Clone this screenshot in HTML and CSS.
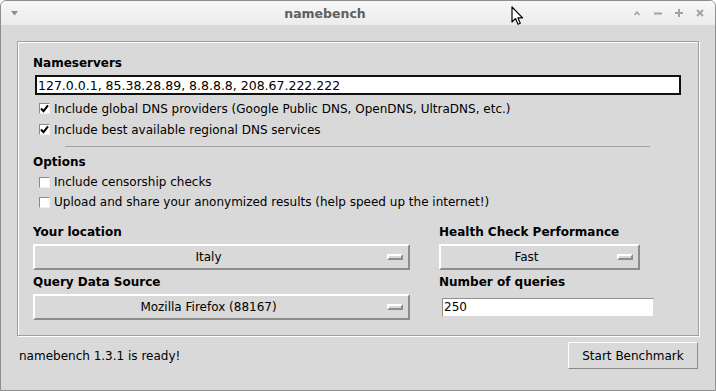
FILE: index.html
```html
<!DOCTYPE html>
<html lang="en">
<head>
    <meta charset="UTF-8">
    <title>namebench</title>
    <link rel="stylesheet" href="styles.css">
</head>
<body>
    <div class="window">
        <div class="titlebar">
            <svg class="menu-arrow" width="7" height="5" viewBox="0 0 7 5"><path d="M0 0 H7 L3.5 4.5 Z" fill="#8c8c8c"/></svg>
            <div class="title">namebench</div>
            <div class="wm-buttons">
                <svg width="10" height="10" viewBox="0 0 10 10"><polyline points="2.5,7 5,4.3 7.5,7" fill="none" stroke="#a2a2a2" stroke-width="1.6"/></svg>
                <svg width="10" height="10" viewBox="0 0 10 10"><line x1="1" y1="5.5" x2="9" y2="5.5" stroke="#a2a2a2" stroke-width="2"/></svg>
                <svg width="10" height="10" viewBox="0 0 10 10"><line x1="1" y1="5" x2="9" y2="5" stroke="#a2a2a2" stroke-width="2"/><line x1="5" y1="1" x2="5" y2="9" stroke="#a2a2a2" stroke-width="2"/></svg>
                <svg width="10" height="10" viewBox="0 0 10 10"><line x1="2" y1="2" x2="8" y2="8" stroke="#a2a2a2" stroke-width="2"/><line x1="8" y1="2" x2="2" y2="8" stroke="#a2a2a2" stroke-width="2"/></svg>
            </div>
        </div>

        <div class="client">
            <div class="frame">
                <div class="heading">Nameservers</div>
                <input class="entry nameservers" type="text" value="127.0.0.1, 85.38.28.89, 8.8.8.8, 208.67.222.222">
                <div class="check wide-row">
                    <span class="box"><svg width="9" height="9" viewBox="0 0 9 9"><polyline points="1,4.5 3.5,7.2 8,1.3" fill="none" stroke="#000" stroke-width="2"/></svg></span>
                    Include global DNS providers (Google Public DNS, OpenDNS, UltraDNS, etc.)
                </div>
                <div class="check wide-row">
                    <span class="box"><svg width="9" height="9" viewBox="0 0 9 9"><polyline points="1,4.5 3.5,7.2 8,1.3" fill="none" stroke="#000" stroke-width="2"/></svg></span>
                    Include best available regional DNS services
                </div>
                <div class="separator"></div>

                <div class="heading options">Options</div>
                <div class="check">
                    <span class="box"></span>
                    Include censorship checks
                </div>
                <div class="check">
                    <span class="box"></span>
                    Upload and share your anonymized results (help speed up the internet!)
                </div>

                <div class="choices">
                    <div class="heading">Your location</div>
                    <div class="heading">Health Check Performance</div>
                    <div class="menubutton">
                        <span class="value">Italy</span>
                        <span class="indicator"></span>
                    </div>
                    <div class="menubutton short">
                        <span class="value">Fast</span>
                        <span class="indicator"></span>
                    </div>
                    <div class="heading">Query Data Source</div>
                    <div class="heading">Number of queries</div>
                    <div class="menubutton">
                        <span class="value">Mozilla Firefox (88167)</span>
                        <span class="indicator"></span>
                    </div>
                    <div class="cell">
                        <input class="entry queries" type="text" value="250">
                    </div>
                </div>
            </div>

            <div class="footer">
                <span class="status">namebench 1.3.1 is ready!</span>
                <button class="start">Start Benchmark</button>
            </div>
        </div>

        <svg class="cursor" width="13" height="20" viewBox="0 0 13 20"><path d="M1 1 L1 16 L4.5 12.6 L7 18.3 L9.3 17.3 L6.9 11.8 L11.6 11.8 Z" fill="#fff" stroke="#000" stroke-width="1.2" stroke-linejoin="round"/></svg>
    </div>
</body>
</html>
```

FILE: styles.css
```css
body {
    margin: 0;
    background: #ffffff;
    font-family: "DejaVu Sans", Verdana, sans-serif;
    font-size: 12px;
    color: #000;
}
.window {
    position: relative;
    width: 716px;
    height: 391px;
    box-sizing: border-box;
    border: 1px solid #8e8e8e;
    border-radius: 6px 6px 0 0;
    overflow: hidden;
    background: #d9d9d9;
}
.titlebar {
    height: 24px;
    display: flex;
    align-items: center;
    padding: 0 10px 0 10px;
    background: linear-gradient(#f7f7f7, #ececec);
}
.menu-arrow {
    margin-top: 1px;
}
.title {
    flex: 1;
    text-align: center;
    font-size: 12.5px;
    font-weight: bold;
    color: #5f5f5f;
}
.wm-buttons {
    display: flex;
    gap: 11px;
}
.client {
    height: 365px;
}
.frame {
    margin: 16px 16px 0 16px;
    padding: 11px 0 15px 15px;
    border: 1px solid #9f9f9f;
    box-shadow: inset 1px 1px 0 #fff, 1px 1px 0 #fff;
}
.heading {
    height: 20px;
    line-height: 21px;
    font-weight: bold;
}
.entry {
    display: block;
    box-sizing: border-box;
    margin: 0;
    font-family: "DejaVu Sans", Verdana, sans-serif;
    font-size: 12px;
    color: #000;
    background: #fff;
    outline: none;
}
.nameservers {
    margin: 2px 0 0 2px;
    width: 646px;
    height: 20px;
    padding: 0 0 0 1px;
    font-size: 12.5px;
    border: 2px solid #111;
}
.check {
    display: flex;
    align-items: center;
    height: 20px;
    padding-left: 6px;
}
.wide-row {
    height: 21px;
}
.nameservers + .check {
    margin-top: 3px;
}
.box {
    width: 11px;
    height: 11px;
    box-sizing: border-box;
    margin-right: 4px;
    background: #fff;
    border: 1px solid;
    border-color: #8a8a8a #efefef #efefef #8a8a8a;
    display: flex;
    align-items: center;
    justify-content: center;
}
.separator {
    margin: 6px 0 0 32px;
    width: 585px;
    height: 1px;
    background: #a2a2a2;
}
.options {
    margin-top: 5px;
}
.choices {
    margin-top: 10px;
    display: grid;
    grid-template-columns: 377px 215px;
    grid-template-rows: 20px 26px 20px 26px;
    column-gap: 29px;
    row-gap: 2px;
}
.menubutton {
    display: flex;
    align-items: center;
    box-sizing: border-box;
    height: 26px;
    border: 2px solid;
    border-color: #ffffff #8c8c8c #8c8c8c #ffffff;
    background: #d9d9d9;
}
.menubutton.short {
    width: 201px;
}
.value {
    flex: 1;
    text-align: center;
    padding-right: 5px;
}
.indicator {
    width: 16px;
    height: 6px;
    box-sizing: border-box;
    margin-right: 5px;
    border: 2px solid;
    border-color: #ffffff #8c8c8c #8c8c8c #ffffff;
}
.cell {
    display: flex;
    align-items: center;
}
.queries {
    margin-left: 3px;
    width: 212px;
    height: 19px;
    padding: 0 0 0 1px;
    border: 1px solid;
    border-color: #8f8f8f #d9d9d9 #d9d9d9 #8f8f8f;
}
.footer {
    display: flex;
    align-items: center;
    justify-content: space-between;
    padding: 6px 17px 0 18px;
}
.start {
    width: 130px;
    height: 27px;
    margin: 0;
    padding: 0;
    font-family: "DejaVu Sans", Verdana, sans-serif;
    font-size: 12px;
    color: #000;
    background: #d9d9d9;
    border: 1px solid;
    border-color: #ffffff #8a8a8a #8a8a8a #ffffff;
    border-radius: 0;
}
.cursor {
    position: absolute;
    left: 510px;
    top: 5px;
}
```
